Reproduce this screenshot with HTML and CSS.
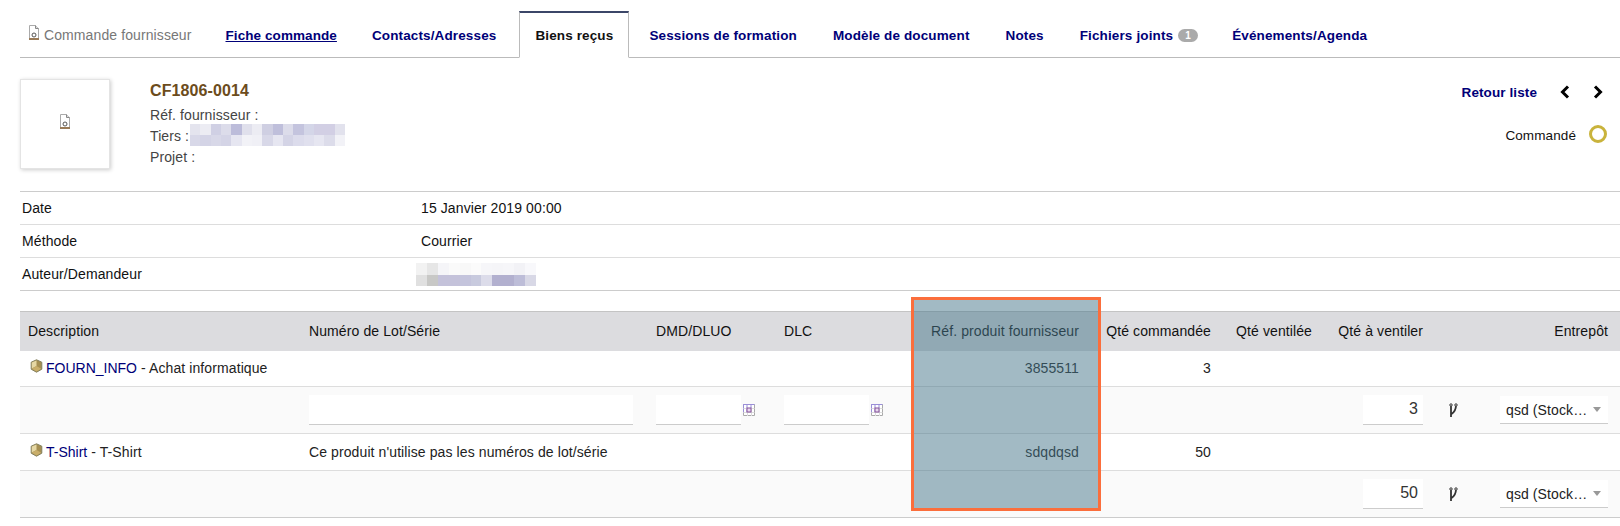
FILE: index.html
```html
<!DOCTYPE html>
<html lang="fr">
<head>
    <meta charset="UTF-8">
    <title>Commande fournisseur</title>
    <link rel="stylesheet" href="styles.css">
</head>
<body>
<!--onglets-->
<div class="tabs">
    <div class="tab tab-title">
        <svg class="doc-icon" width="12" height="16" viewBox="0 0 12 16"><path d="M1.5 .5h6l3 3v11h-9z" fill="#fff" stroke="#aaa"/><path d="M7.5 .5v3h3" fill="#ddd" stroke="#888"/><circle cx="6" cy="10" r="2" fill="none" stroke="#555"/><rect x="1" y="13" width="10" height="2" fill="#9a7b58"/></svg>
        Commande fournisseur
    </div>
    <a class="tab tab-link tab-first" href="#">Fiche commande</a>
    <a class="tab tab-link" href="#">Contacts/Adresses</a>
    <a class="tab tab-link tab-active" href="#">Biens reçus</a>
    <a class="tab tab-link" href="#">Sessions de formation</a>
    <a class="tab tab-link" href="#">Modèle de document</a>
    <a class="tab tab-link" href="#">Notes</a>
    <a class="tab tab-link" href="#">Fichiers joints <span class="badge">1</span></a>
    <a class="tab tab-link" href="#">Événements/Agenda</a>
</div>

<!--bandeau de la commande-->
<div class="banner">
    <div class="photo">
        <svg class="doc-icon" width="12" height="16" viewBox="0 0 12 16"><path d="M1.5 .5h6l3 3v11h-9z" fill="#fff" stroke="#aaa"/><path d="M7.5 .5v3h3" fill="#ddd" stroke="#888"/><circle cx="6" cy="10" r="2" fill="none" stroke="#555"/><rect x="1" y="13" width="10" height="2" fill="#9a7b58"/></svg>
    </div>
    <div class="ref-block">
        <div class="ref">CF1806-0014</div>
        <div>Réf. fournisseur :</div>
        <div class="tiers">Tiers :
            <svg class="blur blur-tiers" width="155" height="22" viewBox="0 0 15 2" preserveAspectRatio="none" shape-rendering="crispEdges">
                <rect x="0" y="0" width="1" height="1" fill="#e4e4ee"/><rect x="1" y="0" width="1" height="1" fill="#ececf3"/><rect x="2" y="0" width="1" height="1" fill="#d0d0e4"/><rect x="3" y="0" width="1" height="1" fill="#dcdcea"/><rect x="4" y="0" width="1" height="1" fill="#bcbcda"/><rect x="5" y="0" width="1" height="1" fill="#e0e0ec"/><rect x="6" y="0" width="1" height="1" fill="#ececf3"/><rect x="7" y="0" width="1" height="1" fill="#cfcfe2"/><rect x="8" y="0" width="1" height="1" fill="#bfbfdb"/><rect x="9" y="0" width="1" height="1" fill="#dcdcea"/><rect x="10" y="0" width="1" height="1" fill="#c4c4de"/><rect x="11" y="0" width="1" height="1" fill="#d4d6e8"/><rect x="12" y="0" width="1" height="1" fill="#d2cfe4"/><rect x="13" y="0" width="1" height="1" fill="#d2cfe4"/><rect x="14" y="0" width="1" height="1" fill="#e2e2ed"/>
                <rect x="0" y="1" width="1" height="1" fill="#d8d8e8"/><rect x="1" y="1" width="1" height="1" fill="#d4d4e6"/><rect x="2" y="1" width="1" height="1" fill="#d8d8e8"/><rect x="3" y="1" width="1" height="1" fill="#d4d4e6"/><rect x="4" y="1" width="1" height="1" fill="#e6e6f1"/><rect x="5" y="1" width="1" height="1" fill="#f2f2f7"/><rect x="6" y="1" width="1" height="1" fill="#f0f0f6"/><rect x="7" y="1" width="1" height="1" fill="#d8d8e8"/><rect x="8" y="1" width="1" height="1" fill="#e6e6f1"/><rect x="9" y="1" width="1" height="1" fill="#d4d4e6"/><rect x="10" y="1" width="1" height="1" fill="#dcdcec"/><rect x="11" y="1" width="1" height="1" fill="#e0e0ee"/><rect x="12" y="1" width="1" height="1" fill="#e6e6f1"/><rect x="13" y="1" width="1" height="1" fill="#dcdcea"/><rect x="14" y="1" width="1" height="1" fill="#f2f2f7"/>
            </svg>
        </div>
        <div>Projet :</div>
    </div>
    <div class="banner-right">
        <div class="nav-line">
            <a class="back" href="#">Retour liste</a>
            <svg class="chevron" width="12" height="14" viewBox="0 0 12 14"><path d="M9 1.5L3.5 7L9 12.5" fill="none" stroke="#000" stroke-width="3"/></svg>
            <svg class="chevron chevron-next" width="12" height="14" viewBox="0 0 12 14"><path d="M3 1.5L8.5 7L3 12.5" fill="none" stroke="#000" stroke-width="3"/></svg>
        </div>
        <div class="status-line">
            Commandé
            <span class="status-dot"></span>
        </div>
    </div>
</div>

<!--informations-->
<div class="fields">
    <div class="field"><div class="field-label">Date</div><div>15 Janvier 2019 00:00</div></div>
    <div class="field"><div class="field-label">Méthode</div><div>Courrier</div></div>
    <div class="field"><div class="field-label">Auteur/Demandeur</div>
        <svg class="blur" width="120" height="23" viewBox="0 0 11 2" preserveAspectRatio="none" shape-rendering="crispEdges">
            <rect x="0" y="0" width="1" height="1" fill="#f2f2f2"/><rect x="1" y="0" width="1" height="1" fill="#e6e6e6"/><rect x="2" y="0" width="1" height="1" fill="#f5f5f8"/><rect x="3" y="0" width="1" height="1" fill="#fafafa"/><rect x="4" y="0" width="1" height="1" fill="#f8f8f8"/><rect x="5" y="0" width="1" height="1" fill="#fbfbfb"/><rect x="6" y="0" width="1" height="1" fill="#f6f6f9"/><rect x="7" y="0" width="1" height="1" fill="#f5f5f8"/><rect x="8" y="0" width="1" height="1" fill="#f6f6f9"/><rect x="9" y="0" width="1" height="1" fill="#f2f2f6"/><rect x="10" y="0" width="1" height="1" fill="#f8f8fb"/>
            <rect x="0" y="1" width="1" height="1" fill="#e0e0e0"/><rect x="1" y="1" width="1" height="1" fill="#c8c8c6"/><rect x="2" y="1" width="1" height="1" fill="#c4c2da"/><rect x="3" y="1" width="1" height="1" fill="#c4c2da"/><rect x="4" y="1" width="1" height="1" fill="#c4c4dc"/><rect x="5" y="1" width="1" height="1" fill="#c8cade"/><rect x="6" y="1" width="1" height="1" fill="#dcdcea"/><rect x="7" y="1" width="1" height="1" fill="#b2b0cf"/><rect x="8" y="1" width="1" height="1" fill="#b2b0cf"/><rect x="9" y="1" width="1" height="1" fill="#bdbdd8"/><rect x="10" y="1" width="1" height="1" fill="#d8d8e6"/>
        </svg>
    </div>
</div>

<!--lignes de la commande-->
<table class="lines">
    <colgroup>
        <col class="c-desc"><col class="c-lot"><col class="c-date"><col class="c-date"><col class="c-ref"><col class="c-qc"><col class="c-qv"><col class="c-qa"><col class="c-split"><col class="c-wh">
    </colgroup>
    <tr class="head">
        <td>Description</td>
        <td>Numéro de Lot/Série</td>
        <td>DMD/DLUO</td>
        <td>DLC</td>
        <td class="right">Réf. produit fournisseur</td>
        <td class="right">Qté commandée</td>
        <td class="right">Qté ventilée</td>
        <td class="right">Qté à ventiler</td>
        <td class="right" colspan="2">Entrepôt</td>
    </tr>
    <tr class="line">
        <td><svg class="box-icon" width="13" height="14" viewBox="0 0 13 14"><path d="M6.5 .8L11.8 3.2V10.2L6.5 13.2L1.2 10.2V3.2z" fill="#a58f52" stroke="#83805f"/><path d="M1.8 3.6L6.5 1.5V7L1.8 9.6z" fill="#e6d8a4"/><path d="M6.5 7L11.2 9.8L6.5 12.6L1.8 9.8z" fill="#c9ae6a"/></svg><a href="#">FOURN_INFO</a> - Achat informatique</td>
        <td></td><td></td><td></td>
        <td class="right">3855511</td>
        <td class="right">3</td>
        <td></td><td></td><td></td><td></td>
    </tr>
    <tr class="dispatch">
        <td></td>
        <td><input class="inp inp-lot" type="text"></td>
        <td><div class="date-cell"><input class="inp inp-date" type="text"><svg class="cal" width="12" height="12" viewBox="0 0 12 12"><path d="M.5 .5h11v11h-11z" fill="#fff" stroke="#aaa"/><path d="M.5 3.5V.5h11M.5 .5v8M4 .5v8M8 .5v8" fill="none" stroke="#9a8fd8"/><path d="M.5 4.5h11M.5 8.5h11M4.5 4v8M8.5 4v8" fill="none" stroke="#ddd"/><rect x="4" y="4" width="4" height="4" fill="#e8d8ee" stroke="#84509a"/></svg></div></td>
        <td><div class="date-cell"><input class="inp inp-date" type="text"><svg class="cal" width="12" height="12" viewBox="0 0 12 12"><path d="M.5 .5h11v11h-11z" fill="#fff" stroke="#aaa"/><path d="M.5 3.5V.5h11M.5 .5v8M4 .5v8M8 .5v8" fill="none" stroke="#9a8fd8"/><path d="M.5 4.5h11M.5 8.5h11M4.5 4v8M8.5 4v8" fill="none" stroke="#ddd"/><rect x="4" y="4" width="4" height="4" fill="#e8d8ee" stroke="#84509a"/></svg></div></td>
        <td></td><td></td><td></td>
        <td class="right"><input class="inp inp-qty" type="text" value="3"></td>
        <td class="split-cell"><svg width="9" height="15" viewBox="0 0 9 15"><path d="M2 2V14M7 2C7 6 5.5 9 2.5 11" fill="none" stroke="#333" stroke-width="1.8"/><circle cx="2" cy="2" r="1.2" fill="#fff" stroke="#333"/><circle cx="7" cy="2" r="1.2" fill="#fff" stroke="#333"/></svg></td>
        <td class="right"><div class="select"><span class="select-text">qsd (Stock…</span><span class="caret"></span></div></td>
    </tr>
    <tr class="line line-tall">
        <td><svg class="box-icon" width="13" height="14" viewBox="0 0 13 14"><path d="M6.5 .8L11.8 3.2V10.2L6.5 13.2L1.2 10.2V3.2z" fill="#a58f52" stroke="#83805f"/><path d="M1.8 3.6L6.5 1.5V7L1.8 9.6z" fill="#e6d8a4"/><path d="M6.5 7L11.2 9.8L6.5 12.6L1.8 9.8z" fill="#c9ae6a"/></svg><a href="#">T-Shirt</a> - T-Shirt</td>
        <td>Ce produit n'utilise pas les numéros de lot/série</td>
        <td></td><td></td>
        <td class="right">sdqdqsd</td>
        <td class="right">50</td>
        <td></td><td></td><td></td><td></td>
    </tr>
    <tr class="dispatch last">
        <td></td><td></td><td></td><td></td><td></td><td></td><td></td>
        <td class="right"><input class="inp inp-qty" type="text" value="50"></td>
        <td class="split-cell"><svg width="9" height="15" viewBox="0 0 9 15"><path d="M2 2V14M7 2C7 6 5.5 9 2.5 11" fill="none" stroke="#333" stroke-width="1.8"/><circle cx="2" cy="2" r="1.2" fill="#fff" stroke="#333"/><circle cx="7" cy="2" r="1.2" fill="#fff" stroke="#333"/></svg></td>
        <td class="right"><div class="select"><span class="select-text">qsd (Stock…</span><span class="caret"></span></div></td>
    </tr>
</table>

<!--cadre orange par dessus la colonne-->
<div class="highlight"></div>
</body>
</html>
```

FILE: styles.css
```css
*{
    box-sizing: border-box;
}
html,body{
    margin: 0;
    padding: 0;
}
body{
    position: relative;
    height: 526px;
    overflow: hidden;
    padding-left: 20px;
    padding-top: 11px;
    font-family: "Liberation Sans", Arial, sans-serif;
    font-size: 14px;
    letter-spacing: .1px;
    color: #222;
    background-color: #fff;
}
a{
    color: #000078;
    text-decoration: none;
}

/*onglets*/
.tabs{
    display: flex;
    align-items: flex-end;
    height: 47px;
    border-bottom: 1px solid #bbb;
}
.tab{
    display: flex;
    align-items: center;
    white-space: nowrap;
    height: 46px;
    padding-top: 2px;
}
.tab-title{
    width: 188px;
    padding-left: 8px;
    color: #777;
}
.doc-icon{
    margin-right: 4px;
    margin-top: -4px;
}
.tab-link{
    padding-left: 18px;
    padding-right: 18px;
    font-weight: bold;
    font-size: 13.5px;
    letter-spacing: .13px;
}
.tab-first{
    padding-left: 17.5px;
    padding-right: 17px;
    letter-spacing: .08px;
    text-decoration: underline;
}
.tab-active{
    height: 47px;
    margin: 0 2px 0 5px;
    padding-left: 15px;
    padding-right: 15px;
    padding-top: 0;
    color: #111;
    background-color: #fff;
    border: 1px solid #bbb;
    border-top: 2px solid #3b4668;
    border-bottom: 1px solid #fff;
    position: relative;
    top: 1px;
}
.badge{
    display: inline-block;
    width: 20px;
    height: 13px;
    margin-left: 5px;
    margin-right: -2px;
    line-height: 13px;
    border-radius: 7px;
    text-align: center;
    font-size: 10px;
    color: #fff;
    background-color: #aaa;
}

/*bandeau*/
.banner{
    display: flex;
    height: 133px;
    padding-top: 21px;
}
.photo{
    display: flex;
    align-items: center;
    justify-content: center;
    width: 90px;
    height: 90px;
    padding-bottom: 4px;
    background-color: #fff;
    border: 1px solid #e4e4e4;
    box-shadow: 1px 1px 4px #ccc;
}
.photo .doc-icon{
    margin: 0;
}
.ref-block{
    margin-left: 40px;
    line-height: 21px;
    color: #444;
}
.ref{
    margin-top: 1px;
    margin-bottom: 4px;
    font-size: 16px;
    font-weight: bold;
    color: #6c4c1c;
}
.tiers{
    position: relative;
    height: 21px;
}
.blur{
    display: block;
}
.blur-tiers{
    position: absolute;
    left: 40px;
    top: -2px;
}
.banner-right{
    margin-left: auto;
    padding-top: 5px;
}
.nav-line{
    display: flex;
    align-items: center;
    justify-content: flex-end;
    height: 16px;
    padding-right: 16px;
}
.back{
    font-weight: bold;
    font-size: 13.5px;
    margin-right: 22px;
}
.chevron-next{
    margin-left: 21px;
}
.status-line{
    display: flex;
    align-items: center;
    justify-content: flex-end;
    margin-top: 27px;
    padding-right: 13px;
    font-size: 13.5px;
    color: #111;
}
.status-dot{
    width: 18px;
    height: 18px;
    margin-left: 13px;
    margin-top: -2px;
    border: 3px solid #c9b33c;
    border-radius: 50%;
}

/*informations*/
.fields{
    border-top: 1px solid #ccc;
}
.field{
    display: flex;
    align-items: center;
    height: 33px;
    border-bottom: 1px solid #ddd;
    color: #111;
}
.field:last-child{
    border-bottom-color: #ccc;
}
.field-label{
    width: 401px;
    padding-left: 2px;
}
.field .blur{
    margin-left: -5px;
}

/*tableau*/
.lines{
    table-layout: fixed;
    width: 1600px;
    margin-top: 20px;
    border-collapse: collapse;
    color: #222;
}
.c-desc{width: 281px;}
.c-lot{width: 347px;}
.c-date{width: 128px;}
.c-ref{width: 183px;}
.c-qc{width: 132px;}
.c-qv{width: 101px;}
.c-qa{width: 111px;}
.c-split{width: 61px;}
.c-wh{width: 128px;}
.lines td{
    padding: 0 8px;
    white-space: nowrap;
}
.lines td:last-child{
    padding-right: 12px;
}
.right{
    text-align: right;
}
.head td{
    height: 39px;
    color: #111;
    background-color: #dcdcdf;
    border-top: 1px solid #c4c4c4;
}
.line td{
    height: 36px;
    border-bottom: 1px solid #ddd;
    background-color: #fff;
}
.line a{
    letter-spacing: 0;
}
.line-tall td{
    height: 37px;
}
.dispatch td{
    height: 47px;
    border-bottom: 1px solid #ddd;
    background-color: #fafafa;
}
.dispatch.last td{
    border-bottom-color: #ccc;
}
.box-icon{
    margin: -2px 3px 0 2px;
    vertical-align: 0;
}
.inp{
    display: block;
    height: 30px;
    padding: 0 5px;
    border: 0;
    border-bottom: 1px solid #ccc;
    background-color: #fff;
    font: inherit;
    color: #333;
}
.inp-lot{
    width: 324px;
}
.inp-date{
    width: 85px;
}
.inp-qty{
    width: 60px;
    margin-left: auto;
    padding-bottom: 2px;
    text-align: right;
    font-size: 16px;
}
.date-cell{
    display: flex;
    align-items: center;
    gap: 2px;
}
.split-cell{
    padding: 3px 0 0 18px !important;
}
.select{
    display: flex;
    align-items: center;
    justify-content: space-between;
    height: 28px;
    padding: 0 7px 0 6px;
    text-align: left;
    background-color: #fff;
    border-bottom: 1px solid #ccc;
}
.caret{
    width: 0;
    height: 0;
    border-left: 4px solid transparent;
    border-right: 4px solid transparent;
    border-top: 5px solid #999;
}

/*cadre*/
.highlight{
    position: absolute;
    left: 911px;
    top: 297px;
    width: 190px;
    height: 214px;
    border: 3px solid #fb6e3c;
    background-color: rgba(70,118,138,.5);
}
```
